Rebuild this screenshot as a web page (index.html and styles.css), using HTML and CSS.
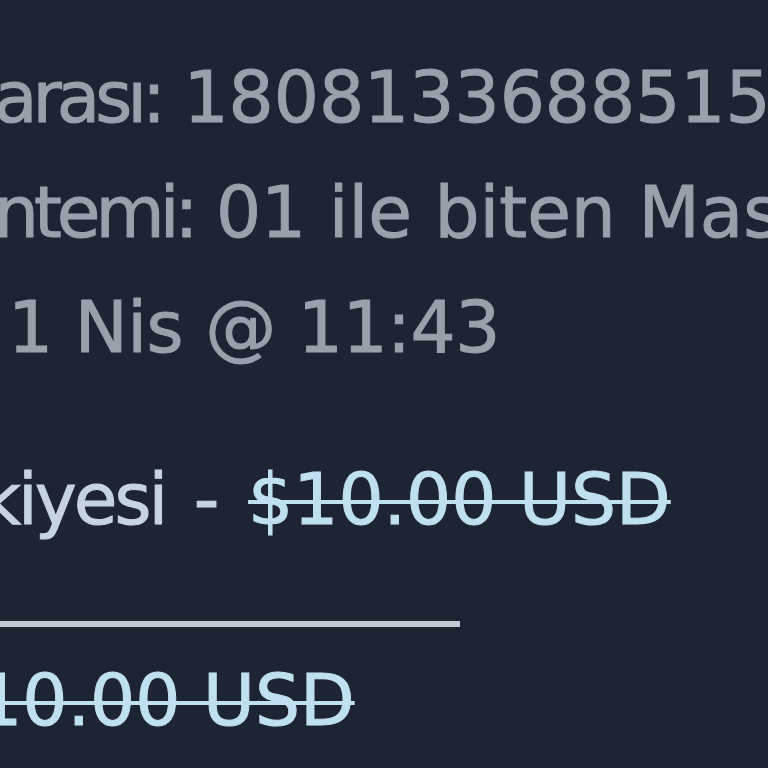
FILE: index.html
```html
<!DOCTYPE html>
<html lang="tr">
<head>
<meta charset="utf-8">
<title>Satın alma ayrıntıları</title>
<link rel="stylesheet" href="styles.css">
</head>
<body>
<main class="receipt">
  <section class="meta">
    <p class="line line-order"><span class="label">arası:</span> 18081336885151</p>
    <p class="line line-pay"><span class="label">ntemi:</span> 01 ile biten Mastercard</p>
    <p class="line line-date">1 Nis @ 11:43</p>
  </section>
  <section class="items">
    <p class="line line-item"><span class="item-name">kiyesi -</span> <s class="price">$10.00 USD</s></p>
    <hr class="rule">
    <p class="line line-total"><s class="price">$10.00 USD</s></p>
  </section>
</main>
</body>
</html>
```
FILE: styles.css
```css
html, body {
  margin: 0;
  padding: 0;
  background: #1d2432;
}
body {
  width: 768px;
  height: 768px;
  overflow: hidden;
  font-family: "DejaVu Sans", Verdana, sans-serif;
  font-size: 71px;
  line-height: 115px;
  color: #98a1ab;
}
.receipt {
  padding-top: 40px;
}
.line {
  margin: 0;
  white-space: nowrap;
  -webkit-text-stroke: 1px currentColor;
}
.label {
  letter-spacing: -5px;
}
.line-order { text-indent: -6px; }
.line-pay { text-indent: -6px; }
.line-date { text-indent: 8px; letter-spacing: -0.5px; }
.items {
  margin-top: 57px;
}
.line-item {
  text-indent: -20px;
  word-spacing: 9px;
}
.item-name {
  color: #c6d4df;
  letter-spacing: -3px;
}
.price {
  color: #bfe0f0;
  text-decoration-thickness: 4px;
  word-spacing: 0;
}
.rule {
  width: 460px;
  height: 6px;
  margin: 64px 0 16px 0;
  border: 0;
  background: #c3cad3;
}
.line-total {
  text-indent: -68px;
}
```
